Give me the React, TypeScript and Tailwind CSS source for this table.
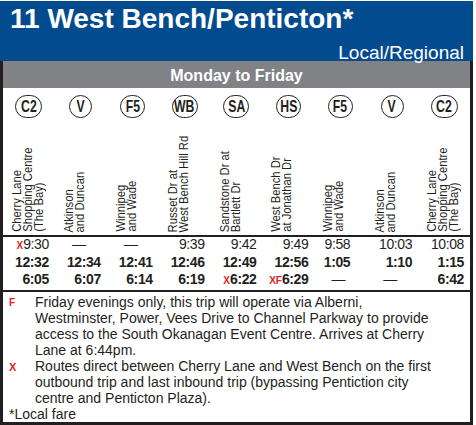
import React from "react";

const stops = [
  { code: "C2", w: "w-[27px]", name: ["Cherry Lane", "Shopping Centre", "(The Bay)"] },
  { code: "V", w: "w-[23px]", name: ["Atkinson", "and Duncan"] },
  { code: "F5", w: "w-[25px]", name: ["Winnipeg", "and Wade"] },
  { code: "WB", w: "w-[26px]", name: ["Russet Dr at", "West Bench Hill Rd"] },
  { code: "SA", w: "w-[26px]", name: ["Sandstone Dr at", "Bartlett Dr"] },
  { code: "HS", w: "w-[25px]", name: ["West Bench Dr", "at Jonathan Dr"] },
  { code: "F5", w: "w-[25px]", name: ["Winnipeg", "and Wade"] },
  { code: "V", w: "w-[23px]", name: ["Atkinson", "and Duncan"] },
  { code: "C2", w: "w-[27px]", name: ["Cherry Lane", "Shopping Centre", "(The Bay)"] },
];

// "" = dash, prefix marks are red
const trips: { bold: boolean; cells: { t: string; mark?: string }[] }[] = [
  {
    bold: false,
    cells: [
      { t: "9:30", mark: "X" },
      { t: "" },
      { t: "" },
      { t: "9:39" },
      { t: "9:42" },
      { t: "9:49" },
      { t: "9:58" },
      { t: "10:03" },
      { t: "10:08" },
    ],
  },
  {
    bold: true,
    cells: [
      { t: "12:32" },
      { t: "12:34" },
      { t: "12:41" },
      { t: "12:46" },
      { t: "12:49" },
      { t: "12:56" },
      { t: "1:05" },
      { t: "1:10" },
      { t: "1:15" },
    ],
  },
  {
    bold: true,
    cells: [
      { t: "6:05" },
      { t: "6:07" },
      { t: "6:14" },
      { t: "6:19" },
      { t: "6:22", mark: "X" },
      { t: "6:29", mark: "XF" },
      { t: "" },
      { t: "" },
      { t: "6:42" },
    ],
  },
];

function TimeCell({ t, mark, bold, col }: { t: string; mark?: string; bold: boolean; col: number }) {
  if (!t) {
    return <div className="text-center pr-[4px] font-normal">—</div>;
  }
  return (
    <div className={col === 6 ? "text-right pr-[16px]" : "text-right pr-[6px]"}>
      {mark && <span className="text-[10px] font-bold text-[#e31e24] tracking-normal">{mark}</span>}
      <span className={bold ? "font-bold" : "font-normal"}>{t}</span>
    </div>
  );
}

export default function App() {
  return (
    <div className="w-[476px] h-[425px] bg-white pt-px text-[#231f20] font-['Liberation_Sans',Arial,sans-serif]">
      <div className="w-[473px]">
        <div className="h-[60px] bg-[#034b8f] text-white flex flex-col">
          <div className="pl-[10px] pt-[4px] text-[28px] leading-[28px] font-bold whitespace-nowrap">
            11 West Bench/Penticton*
          </div>
          <div className="mt-[10px] pr-[9px] text-right text-[19px] leading-[19px]">Local/Regional</div>
        </div>

        <div className="border-x-[3px] border-b-[3px] border-[#231f20]">
          <div className="h-[27px] bg-[#808285] text-white font-bold text-[16px] flex items-center justify-center pt-[2px]">
            Monday to Friday
          </div>

          <div className="grid grid-cols-9">
            {stops.map((s, i) => (
              <div key={i} className="flex flex-col items-center">
                <div
                  className={`mt-[7px] h-[23px] ${s.w} rounded-full border-[1.5px] border-[#231f20] flex items-center justify-center`}
                >
                  <span className="inline-block scale-x-[0.72] font-bold text-[17px] leading-none">{s.code}</span>
                </div>
                <div className="h-[117px] w-full flex items-end pl-[9px] pb-[3px]">
                  <div className="scale-y-[0.9] origin-bottom">
                    <div className="[writing-mode:vertical-rl] rotate-180 text-[12.5px] leading-[11px] whitespace-nowrap">
                      {s.name.map((l, j) => (
                        <div key={j}>{l}</div>
                      ))}
                    </div>
                  </div>
                </div>
              </div>
            ))}
          </div>

          <div className="border-t-2 border-b-2 border-[#231f20]">
            <div className="-mt-px pb-px">
              {trips.map((r, ri) => (
                <div key={ri} className="grid grid-cols-9 text-[14px] leading-[17px] tracking-[-0.4px]">
                  {r.cells.map((c, ci) => (
                    <TimeCell key={ci} t={c.t} mark={c.mark} bold={r.bold} col={ci} />
                  ))}
                </div>
              ))}
            </div>
          </div>

          <div className="pt-[2px] pl-[6px] text-[14px] leading-[16px] whitespace-nowrap">
            <div className="flex">
              <div className="w-[26px] text-[10px] font-bold text-[#e31e24] leading-[16px] pt-[1px]">F</div>
              <div>
                Friday evenings only, this trip will operate via Alberni,
                <br />
                Westminster, Power, Vees Drive to Channel Parkway to provide
                <br />
                access to the South Okanagan Event Centre. Arrives at Cherry
                <br />
                Lane at 6:44pm.
              </div>
            </div>
            <div className="flex">
              <div className="w-[26px] text-[11px] font-bold text-[#e31e24] leading-[16px] pt-[1px]">X</div>
              <div>
                Routes direct between Cherry Lane and West Bench on the first
                <br />
                outbound trip and last inbound trip (bypassing Pentiction city
                <br />
                centre and Penticton Plaza).
              </div>
            </div>
            <div>*Local fare</div>
          </div>
        </div>
      </div>
    </div>
  );
}
